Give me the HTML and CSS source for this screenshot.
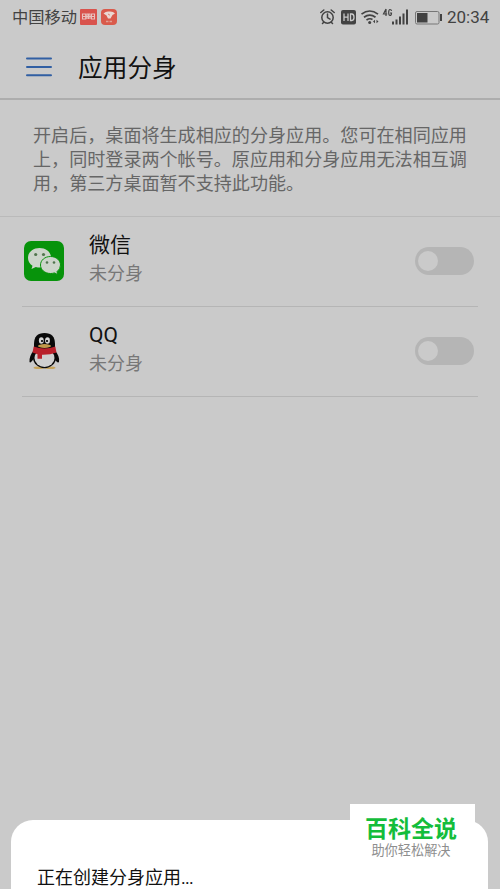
FILE: index.html
```html
<!DOCTYPE html>
<html lang="zh-CN">
<head>
<meta charset="utf-8">
<title>应用分身</title>
<link rel="stylesheet" href="styles.css">
</head>
<body>
<div class="screen">
  <div class="status">
    <span class="carrier">中国移动</span>
    <svg class="note-a" width="17" height="16" viewBox="0 0 17 16"><rect width="17" height="16" rx="1" fill="#d9534d"/><g fill="none" stroke="#e9c2bf" stroke-width="1.1"><path d="M2.5 5h3.200v5H2.500zM7 10V5h3v5M11.500 5h3v5h-3zM2.500 7.500h12M8.500 5v5"/></g></svg>
    <svg class="note-b" width="16" height="16" viewBox="0 0 16 16"><rect width="16" height="16" rx="4" fill="#d95a4b"/><path d="M2.500 4.500Q5 2 8 2.500Q12 2 14 4.500L11.500 6 9.500 9.500H7L5.500 6.500Z" fill="#ead8d2"/><path d="M7 5l2 1.200" stroke="#d95a4b" stroke-width=".7"/><path d="M5 12.500h2.500M8.500 12.500H11" stroke="#e3a095" stroke-width="1.500"/></svg>
    <div class="indicators">
      <svg width="122" height="20" viewBox="0 0 122 20">
        <g fill="none" stroke="#424242" stroke-width="1.500" stroke-linecap="round">
          <circle cx="7.500" cy="10.500" r="5.700"/><path d="M7.500 7v3.700l2.500 1.500M.8 5.500 3.800 3M11.200 3l3 2.500M3.500 15.500 2.500 16.500M11.500 15.500l1 1"/>
          <path d="M41.500 7.200Q49.700.8 58 7.200M44 10.300Q49.700 6 55.500 10.300M46.500 13Q49.700 10.800 52.500 12.500" stroke-width="1.700" stroke-linecap="butt"/>
        </g>
        <rect x="21" y="3" width="15" height="14.500" rx="2" fill="#424242"/>
        <path d="M24 6.500v7.500M28 6.500v7.500M24 10.200h4M30.500 7v6.500h1.300q2.200 0 2.200-3.200t-2.200-3.300z" fill="none" stroke="#cacaca" stroke-width="1.300"/>
        <circle cx="49.700" cy="15.500" r="1.500" fill="#424242"/>
        <path d="M53 14.500 55 12.700v3.600zM58.500 14.500l-2-1.800v3.600z" fill="#424242"/>
        <path d="M66 2v7M66 2 63.500 7h3.700M71.500 4Q71.300 2.500 70 2.500 68.700 2.500 68.700 5.500T70 8.500Q71.500 8.500 71.500 6H70" fill="none" stroke="#424242" stroke-width="1.200"/>
        <path d="M73 14.500v3M76.500 12.500v5M80 9.500v8M83.500 6.500v11M87 2.500v15" stroke="#424242" stroke-width="2"/>
        <rect x="95.500" y="4.500" width="23.500" height="12.500" rx="1.500" fill="none" stroke="#777"/>
        <rect x="97" y="6" width="10.500" height="9.500" fill="#424242"/><path d="M121 7v7" stroke="#424242" stroke-width="2"/>
      </svg>
      <span class="time">20:34</span>
    </div>
  </div>
  <header class="header">
    <svg width="26" height="20" viewBox="0 0 26 20"><path d="M1 1.500h24M1 10h24M1 18.300h24" stroke="#315fa3" stroke-width="2" stroke-linecap="round"/></svg>
    <h1>应用分身</h1>
  </header>
  <p class="intro">开启后，桌面将生成相应的分身应用。您可在相同应用<br>上，同时登录两个帐号。原应用和分身应用无法相互调<br>用，第三方桌面暂不支持此功能。</p>
  <div class="list">
    <div class="row">
      <svg class="icon" width="40" height="40" viewBox="0 0 40 40">
        <rect width="40" height="40" rx="7" fill="#07930b"/>
        <path d="M15.500 7C9 7 4 11.200 4 16.700q0 5.300 4.500 8L7.500 28l4.300-2q2 .5 4 .5C22 26.500 27 22.500 27 16.700S22 7 15.500 7Z" fill="#cdd5cb"/>
        <path d="M26.500 15.500c-5.700 0-10 3.800-10 8.500s4.300 8.500 10 8.500q2 0 4-.6l3.500 1.800-1-3q3.500-2.700 3.500-6.700c0-4.700-4.300-8.500-10-8.500Z" fill="#cdd5cb" stroke="#07930b" stroke-width="1"/>
        <g fill="#52754f"><circle cx="11.700" cy="13.500" r="1.600"/><circle cx="19.500" cy="13.500" r="1.600"/><circle cx="23" cy="21.500" r="1.300"/><circle cx="30" cy="21.500" r="1.300"/></g>
      </svg>
      <div class="label"><div class="name">微信</div><div class="state">未分身</div></div>
      <div class="toggle"><div class="knob"></div></div>
    </div>
    <div class="row">
      <svg class="icon" width="40" height="40" viewBox="0 0 40 40">
        <ellipse cx="15" cy="36.800" rx="5.500" ry="1.300" fill="#c6a35b"/><ellipse cx="26" cy="36.800" rx="5.500" ry="1.300" fill="#c6a35b"/>
        <path d="M10 19Q5 25 5.500 31q1 1.500 4-3h21q3 4.500 4.500 3Q36 25 30.500 19Z" fill="#090909"/>
        <ellipse cx="20.500" cy="26.500" rx="11.500" ry="10.700" fill="#090909"/>
        <path d="M10 19V13Q10 2 20.500 2T31 13v6Z" fill="#090909"/>
        <ellipse cx="20.500" cy="27" rx="10" ry="9" fill="#cfcfcf"/>
        <path d="M9.700 15.500q10.800 4 21.600 0l1.200 6q-6.500 2.500-14.500 2.300v4h-4.500v-4.500L8.500 21.500Z" fill="#b9202a"/>
        <ellipse cx="17.300" cy="9.500" rx="2.400" ry="3.200" fill="#d5d5d5"/><ellipse cx="23.500" cy="9.500" rx="2.400" ry="3.200" fill="#d5d5d5"/>
        <circle cx="18" cy="10" r="1.100"/><circle cx="23" cy="10" r="1.100"/>
        <ellipse cx="20.500" cy="15" rx="6.500" ry="1.900" fill="#c1994a"/>
      </svg>
      <div class="label"><div class="name">QQ</div><div class="state">未分身</div></div>
      <div class="toggle"><div class="knob"></div></div>
    </div>
  </div>
  <div class="sheet">正在创建分身应用<span class="dots">...</span></div>
  <div class="brand"><div class="brand-name">百科全说</div><div class="brand-line">助你轻松解决</div></div>
</div>
</body>
</html>
```
FILE: styles.css
```css
* { box-sizing: border-box; }
body { margin: 0; }
.screen {
  position: relative;
  display: flex;
  flex-direction: column;
  width: 500px;
  height: 889px;
  overflow: hidden;
  background: #cacaca;
  color: #111;
  font-family: Roboto, "Noto Sans CJK SC", sans-serif;
  white-space: nowrap;
}
.status {
  display: flex;
  align-items: center;
  height: 34px;
  padding: 0 11px 0 12px;
  color: #424242;
}
.carrier { width: 67px; margin-top: 2px; font-size: 16.300px; line-height: 24px; }
.note-a { margin-left: 1px; }
.note-b { margin-left: 4px; }
.indicators { display: flex; align-items: center; margin-left: auto; }
.time { width: 42px; margin-left: 5px; font-size: 17px; line-height: 20px; }
.header {
  display: flex;
  align-items: center;
  height: 66px;
  padding-left: 26px;
  border-bottom: 2px solid #adadad;
}
.header svg { margin-top: 1px; }
h1 { margin: 6px 0 0 26px; font-size: 24.700px; font-weight: 400; line-height: 36px; }
.intro {
  height: 117px;
  margin: 0;
  padding: 24px 0 0 33px;
  border-bottom: 1px solid #bababa;
  color: #666;
  font-size: 18.080px;
  line-height: 24.200px;
}
.list { padding: 0 22px; }
.row {
  display: flex;
  align-items: center;
  height: 90px;
  padding: 0 4px 0 2px;
  border-bottom: 1px solid #b5b5b5;
}
.icon { margin-bottom: 2px; }
.label { margin: 0 0 6px 25px; }
.name { font-size: 21px; line-height: 30px; }
.state { color: #777; font-size: 18px; line-height: 28px; }
.toggle {
  width: 59px;
  height: 28px;
  margin: 0 0 1px auto;
  padding: 4px 3px;
  border-radius: 14px;
  background: #b5b5b5;
}
.knob { width: 20px; height: 20px; border-radius: 50%; background: #cacaca; }
.sheet {
  height: 69px;
  margin: auto 12px 0 11px;
  padding: 45px 0 0 26px;
  border-radius: 22px 22px 0 0;
  background: #fff;
  font-size: 18px;
  line-height: 26px;
}
.dots { letter-spacing: -0.8px; }
.brand {
  position: absolute;
  top: 804px;
  left: 350px;
  width: 125px;
  height: 85px;
  background: #fff;
  text-align: center;
}
.brand-name { margin-top: 10px; padding-right: 3px; color: #14bd3b; font-size: 23px; font-weight: 700; line-height: 31px; }
.brand-line { padding-right: 3px; color: #8e8e8e; font-size: 13.200px; line-height: 12px; }
```
